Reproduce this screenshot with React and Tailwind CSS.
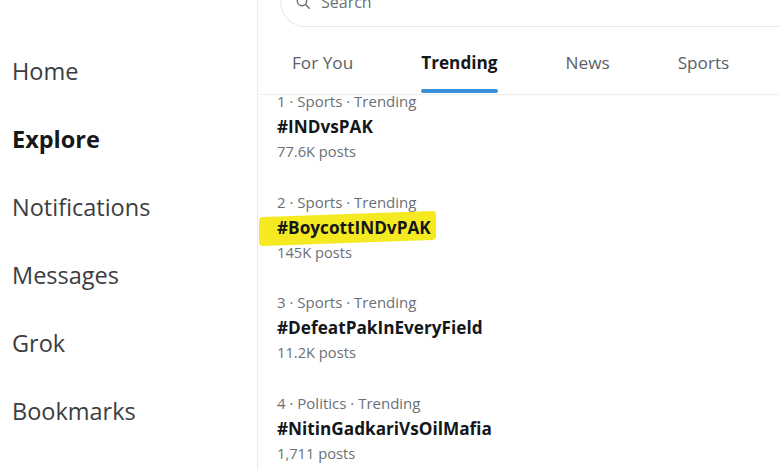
import React from "react";

const nav = [
  { label: "Home", bold: false },
  { label: "Explore", bold: true },
  { label: "Notifications", bold: false },
  { label: "Messages", bold: false },
  { label: "Grok", bold: false },
  { label: "Bookmarks", bold: false },
];

const tabs = [
  { label: "For You", active: false },
  { label: "Trending", active: true },
  { label: "News", active: false },
  { label: "Sports", active: false },
];

const trends = [
  { meta: "1 · Sports · Trending", title: "#INDvsPAK", posts: "77.6K posts" },
  { meta: "2 · Sports · Trending", title: "#BoycottINDvPAK", posts: "145K posts", hl: true },
  { meta: "3 · Sports · Trending", title: "#DefeatPakInEveryField", posts: "11.2K posts" },
  { meta: "4 · Politics · Trending", title: "#NitinGadkariVsOilMafia", posts: "1,711 posts" },
];

export default function App() {
  return (
    <div
      className="flex w-[780px] h-[470px] overflow-hidden bg-white"
      style={{ fontFamily: '"Open Sans", "Noto Sans", sans-serif' }}
    >
      <aside className="w-[258px] shrink-0 border-r border-[#ececec] pt-[38px]">
        {nav.map((n) => (
          <div
            key={n.label}
            className={`h-[68px] flex items-center pl-[12px] text-[23.5px] ${
              n.bold ? "font-bold text-[#16181a]" : "text-[#3b3d40]"
            }`}
          >
            {n.label}
          </div>
        ))}
      </aside>
      <main className="flex-1 flex flex-col">
        <div className="h-[27px] shrink-0 pl-[22px] flex flex-col justify-end">
          <div className="h-[51px] shrink-0 rounded-l-full border border-r-0 border-[#e6e8ea] flex items-center pl-[14px] gap-[10px] text-[#6b7075] text-[16px]">
            <svg width="16" height="16" viewBox="0 0 24 24" fill="none" stroke="#6b7075" strokeWidth="2.2" strokeLinecap="round">
              <circle cx="10.5" cy="10.5" r="7" />
              <path d="M16 16l5.5 5.5" />
            </svg>
            <span>Search</span>
          </div>
        </div>
        <div className="h-[68px] shrink-0 border-b border-[#eceef0] flex pl-[34px] gap-[68px]">
          {tabs.map((t) => (
            <div key={t.label} className="flex flex-col">
              <div
                className={`pt-[24px] leading-[24px] text-[17.2px] ${
                  t.active ? "font-bold text-[#16181a]" : "font-medium text-[#5b6066]"
                }`}
              >
                {t.label}
              </div>
              <div className="flex-1" />
              {t.active ? (
                <div className="h-[4px] mb-[1px] rounded-full bg-[#3a90d8]" />
              ) : null}
            </div>
          ))}
        </div>
        <div className="-mt-[6px] pl-[19px]">
          {trends.map((t) => (
            <div key={t.title} className="h-[100.5px]">
              <div className="leading-[25px] text-[15px] text-[#6b7075]">{t.meta}</div>
              <div className="leading-[25px] text-[17.2px] font-bold text-[#14171a]">
                {t.hl ? (
                  <span className="relative inline-block">
                    <span className="absolute left-[-18px] right-[-5px] top-[-1px] bottom-[-3px] bg-[#f5ea22] rounded-[4px] -skew-y-2" />
                    <span className="relative">{t.title}</span>
                  </span>
                ) : (
                  t.title
                )}
              </div>
              <div className="leading-[25px] text-[14.7px] text-[#6b7075]">{t.posts}</div>
            </div>
          ))}
        </div>
      </main>
    </div>
  );
}
